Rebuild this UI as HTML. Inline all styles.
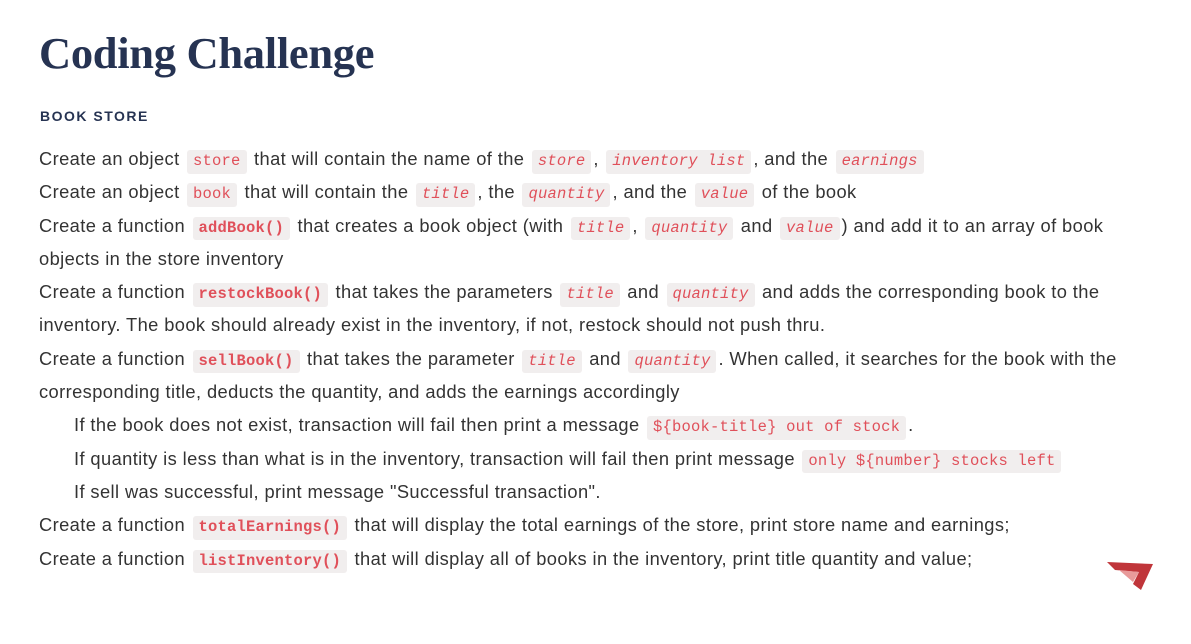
<!DOCTYPE html>
<html><head><meta charset="utf-8"><style>
body{margin:0;background:#fff;width:1191px;height:644px;overflow:hidden;font-family:"Liberation Sans",sans-serif;color:#333;}
h1{position:absolute;left:39px;top:27px;margin:0;font-family:"Liberation Serif",serif;font-weight:bold;font-size:44.5px;color:#263352;letter-spacing:-0.3px}
.h2{position:absolute;left:40px;top:108px;font-size:14px;font-weight:bold;letter-spacing:1.5px;color:#263352}
.c{position:absolute;left:39px;top:142px;width:1130px;font-size:18.3px;line-height:33.3px;letter-spacing:0.4px}
code{font-family:"Liberation Mono",monospace;font-size:15.5px;line-height:1;letter-spacing:0.2px;color:#e0505a;background:#f1eeee;padding:4px 6px;border-radius:3px;margin:0 2px;display:inline-block}
code.i{font-style:italic}
code.b{font-weight:bold}
.ind{padding-left:35px}
</style></head><body>
<h1>Coding Challenge</h1>
<div class="h2">BOOK STORE</div>
<div class="c">
<div>Create an object <code>store</code> that will contain the name of the <code class="i">store</code>, <code class="i">inventory list</code>, and the <code class="i">earnings</code></div>
<div>Create an object <code>book</code> that will contain the <code class="i">title</code>, the <code class="i">quantity</code>, and the <code class="i">value</code> of the book</div>
<div>Create a function <code class="b">addBook()</code> that creates a book object (with <code class="i">title</code>, <code class="i">quantity</code> and <code class="i">value</code>) and add it to an array of book<br>objects in the store inventory</div>
<div>Create a function <code class="b">restockBook()</code> that takes the parameters <code class="i">title</code> and <code class="i">quantity</code> and adds the corresponding book to the<br>inventory. The book should already exist in the inventory, if not, restock should not push thru.</div>
<div>Create a function <code class="b">sellBook()</code> that takes the parameter <code class="i">title</code> and <code class="i">quantity</code>. When called, it searches for the book with the<br>corresponding title, deducts the quantity, and adds the earnings accordingly</div>
<div class="ind">If the book does not exist, transaction will fail then print a message <code>${book-title} out of stock</code>.</div>
<div class="ind">If quantity is less than what is in the inventory, transaction will fail then print message <code>only ${number} stocks left</code></div>
<div class="ind">If sell was successful, print message "Successful transaction".</div>
<div>Create a function <code class="b">totalEarnings()</code> that will display the total earnings of the store, print store name and earnings;</div>
<div>Create a function <code class="b">listInventory()</code> that will display all of books in the inventory, print title quantity and value;</div>
</div>
<svg style="position:absolute;left:1105px;top:560px" width="50" height="34" viewBox="0 0 50 34">
<path d="M2 2 L48 4 L36 30 L28 24 L34 12 L10 10 Z" fill="#c0353a"/>
<path d="M14 10 L34 12 L28 22 Z" fill="#e89a9a"/>
</svg>
</body></html>
